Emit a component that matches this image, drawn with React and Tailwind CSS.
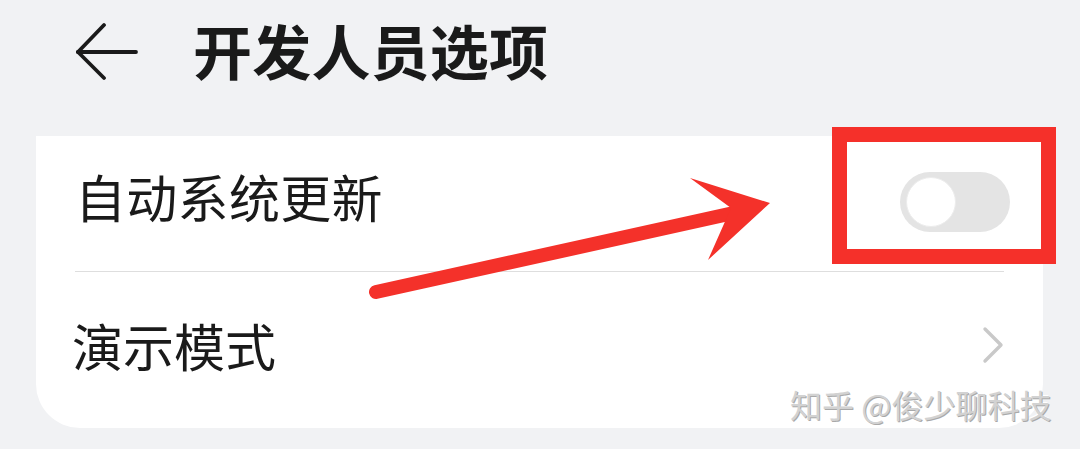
import React from "react";

const cjk = { fontFamily: '"Noto Sans CJK SC", "Noto Sans", sans-serif' };

function BackArrow() {
  return (
    <svg width="63" height="60" viewBox="0 0 63 60" fill="none" stroke="#1a1a1a" strokeWidth="3.8" strokeLinecap="round" strokeLinejoin="round">
      <path d="M2 30 H60" />
      <path d="M2 30 L28 3" />
      <path d="M2 30 L28 56" />
    </svg>
  );
}

function Toggle() {
  return (
    <div className="w-[110px] h-[60px] rounded-full bg-[#e4e4e4] flex items-center pl-[6px]">
      <div className="w-[50px] h-[50px] rounded-full bg-white border border-[#ececec]" />
    </div>
  );
}

function Chevron() {
  return (
    <svg width="22" height="38" viewBox="0 0 22 38" fill="none" stroke="#c9c9c9" strokeWidth="3.4" strokeLinecap="round" strokeLinejoin="round">
      <path d="M3 3 L19 19 L3 35" />
    </svg>
  );
}

export default function App() {
  return (
    <div className="relative w-[1080px] h-[449px] bg-[#f1f2f4] overflow-hidden" style={cjk}>
      {/* header */}
      <div className="h-[136px] flex items-start pl-[76px] pt-[22px]">
        <BackArrow />
        <h1 className="ml-[54px] -mt-[2px] text-[59px] leading-none font-bold text-[#1a1a1a] tracking-[0.2px]">开发人员选项</h1>
      </div>

      {/* settings card */}
      <div className="ml-[36px] w-[1007px] h-[292px] bg-white rounded-b-[44px] px-[39px] flex flex-col">
        <div className="h-[136px] flex items-center justify-between border-b border-[#dedede]">
          <span className="text-[51px] leading-none text-[#1a1a1a] tracking-[0.3px] -mt-[14px]">自动系统更新</span>
          <div className="-mr-[6px] -mt-[4px]">
            <Toggle />
          </div>
        </div>
        <div className="flex-1 flex items-center justify-between pb-[10px]">
          <span className="text-[51px] leading-none text-[#1a1a1a] -ml-[3px]">演示模式</span>
          <Chevron />
        </div>
      </div>

      {/* red annotation: arrow and highlight box */}
      <svg className="absolute left-0 top-0 pointer-events-none" width="1080" height="449" viewBox="0 0 1080 449">
        <line x1="376" y1="292" x2="738" y2="212" stroke="#f4312a" strokeWidth="14" strokeLinecap="round" />
        <polygon points="770,203 690,178 731,208 708,260" fill="#f4312a" />
      </svg>
      <div className="absolute left-[832px] top-[127px] w-[224px] h-[137px] border-[15px] border-[#f5302a]" />

      {/* watermark */}
      <div
        className="absolute left-[790px] top-[388px] text-[32px] leading-none text-[#d2d2d2] whitespace-nowrap"
        style={{ textShadow: "1px 1px 0 #a9a9a9, -1px -1px 0 #ffffff" }}
      >
        知乎 @俊少聊科技
      </div>
    </div>
  );
}
